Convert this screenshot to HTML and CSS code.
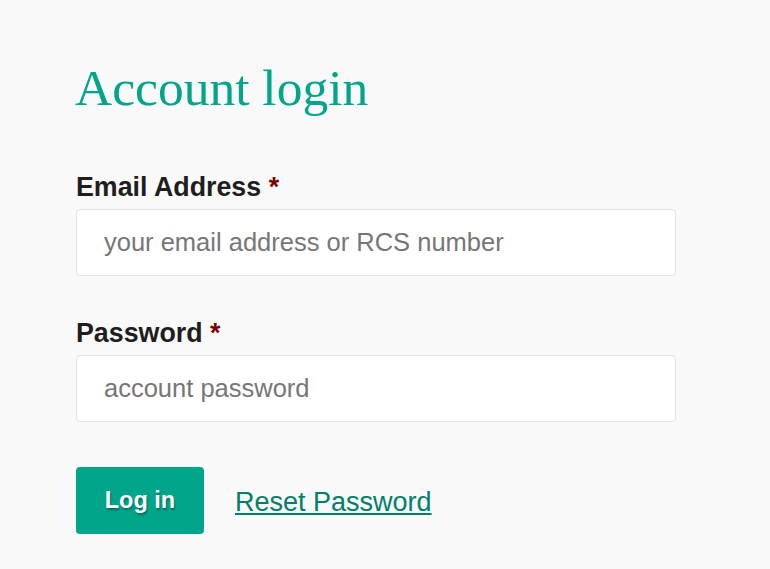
FILE: index.html
```html
<!DOCTYPE html>
<html lang="en">
  <head>
    <meta charset="UTF-8" />
    <meta name="viewport" content="width=device-width, initial-scale=1.0" />
    <title>Account login</title>
    <link rel="stylesheet" href="styles.css">
  </head>
  <body>
    <div class="login-container">
      <h1>Account login</h1>
      <form id="login">
        <div class="field">
          <label for="email">Email Address <span class="req">*</span></label>
          <input type="text" id="email" placeholder="your email address or RCS number" />
        </div>
        <div class="field">
          <label for="password">Password <span class="req">*</span></label>
          <input type="password" id="password" placeholder="account password" />
        </div>
        <div class="actions">
          <button type="submit" class="login-btn">Log in</button>
          <a href="#" class="reset-link">Reset Password</a>
        </div>
      </form>
    </div>
  </body>
</html>
```

FILE: styles.css
```css
body {
  font-family: "Liberation Sans", Arial, sans-serif;
  margin: 0;
  padding: 0;
  background-color: #f9f9f9;
  color: #1e1e1e;
}
.login-container {
  padding: 58px 0 0 76px;
  width: 600px;
}
.login-container h1 {
  font-family: "Liberation Serif", "Times New Roman", serif;
  font-weight: normal;
  font-size: 51.5px;
  line-height: 60px;
  color: #00a58a;
  margin: 0 0 54px -1px;
}
.field {
  margin-bottom: 42px;
}
.field label {
  display: block;
  font-size: 26.8px;
  font-weight: bold;
  line-height: 31px;
  margin-bottom: 6px;
}
.req {
  color: #7a0000;
}
.field input {
  display: block;
  width: 100%;
  height: 67px;
  box-sizing: border-box;
  padding: 0 27px;
  border: 1px solid #e2e2e2;
  border-radius: 4px;
  background-color: #ffffff;
  font-family: inherit;
  font-size: 25.5px;
  color: #1e1e1e;
}
.field input::placeholder {
  color: #767676;
}
.field input:focus {
  outline: none;
  border-color: #00a58a;
}
.actions {
  display: flex;
  align-items: center;
  gap: 31px;
  margin-top: 45px;
}
.login-btn {
  width: 128px;
  height: 67px;
  border: none;
  border-radius: 4px;
  background-color: #00a58a;
  color: #ffffff;
  font-family: inherit;
  font-size: 23.5px;
  font-weight: bold;
  text-shadow: 1px 2px 2px rgba(0, 0, 0, 0.35);
  cursor: pointer;
}
.reset-link {
  font-size: 27px;
  color: #007f6b;
  margin-top: 4px;
}
```
